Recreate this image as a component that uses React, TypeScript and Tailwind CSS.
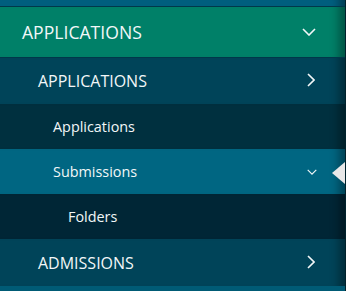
import { ReactNode } from "react";

function ChevronDown({ className }: { className?: string }) {
    return (
        <svg viewBox="0 0 14 8" fill="none" className={className}>
            <path d="M1 1l6 6 6-6" stroke="currentColor" strokeWidth="1.6" />
        </svg>
    );
}

function ChevronRight({ className }: { className?: string }) {
    return (
        <svg viewBox="0 0 8 14" fill="none" className={className}>
            <path d="M1 1l6 6-6 6" stroke="currentColor" strokeWidth="1.6" />
        </svg>
    );
}

function Row({
    className,
    children,
    icon,
}: {
    className: string;
    children: ReactNode;
    icon?: ReactNode;
}) {
    return (
        <div
            className={`relative flex items-center justify-between pr-[30px] shadow-[inset_-14px_0_10px_-8px_rgba(0,0,0,0.35)] ${className}`}
        >
            <span>{children}</span>
            {icon}
        </div>
    );
}

export default function App() {
    return (
        <nav className="w-[346px] h-[291px] overflow-hidden border-r border-[#00222c] bg-[#005b75] text-[#f2f7f8] font-['Open_Sans',sans-serif] flex flex-col">
            <div className="h-[7px] shrink-0 bg-[#005f7f] border-b border-[#00384a] shadow-[inset_-14px_0_10px_-8px_rgba(0,0,0,0.35)]" />

            {/* Top level */}
            <Row
                className="h-[51px] shrink-0 bg-[#008068] border-b border-[#00384a] pl-[22px] text-[17.6px]"
                icon={<ChevronDown className="w-[14px] h-[8px] mr-[-1px]" />}
            >
                APPLICATIONS
            </Row>

            <Row
                className="h-[46px] shrink-0 bg-[#004459] pl-[38px] text-[16px]"
                icon={<ChevronRight className="w-[8px] h-[14px] mb-[2px]" />}
            >
                APPLICATIONS
            </Row>

            <Row className="h-[45px] shrink-0 bg-[#00303f] pl-[53px] text-[14.4px]">
                Applications
            </Row>

            <Row
                className="h-[45px] shrink-0 bg-[#006682] pl-[53px] text-[14.4px]"
                icon={<ChevronDown className="w-[10px] h-[6px] mr-[-2px]" />}
            >
                Submissions
                {/* active marker */}
                <span className="absolute right-0 top-[13px] w-0 h-0 border-y-[11px] border-y-transparent border-r-[13px] border-r-[#e8e8e8]" />
            </Row>

            <Row className="h-[45px] shrink-0 bg-[#002636] pl-[68px] text-[14.4px]">
                Folders
            </Row>

            <Row
                className="h-[47px] shrink-0 bg-[#004459] pl-[38px] text-[16px]"
                icon={<ChevronRight className="w-[8px] h-[14px] mb-[2px]" />}
            >
                ADMISSIONS
            </Row>

            <div className="flex-1 bg-[#005b75]" />
        </nav>
    );
}
